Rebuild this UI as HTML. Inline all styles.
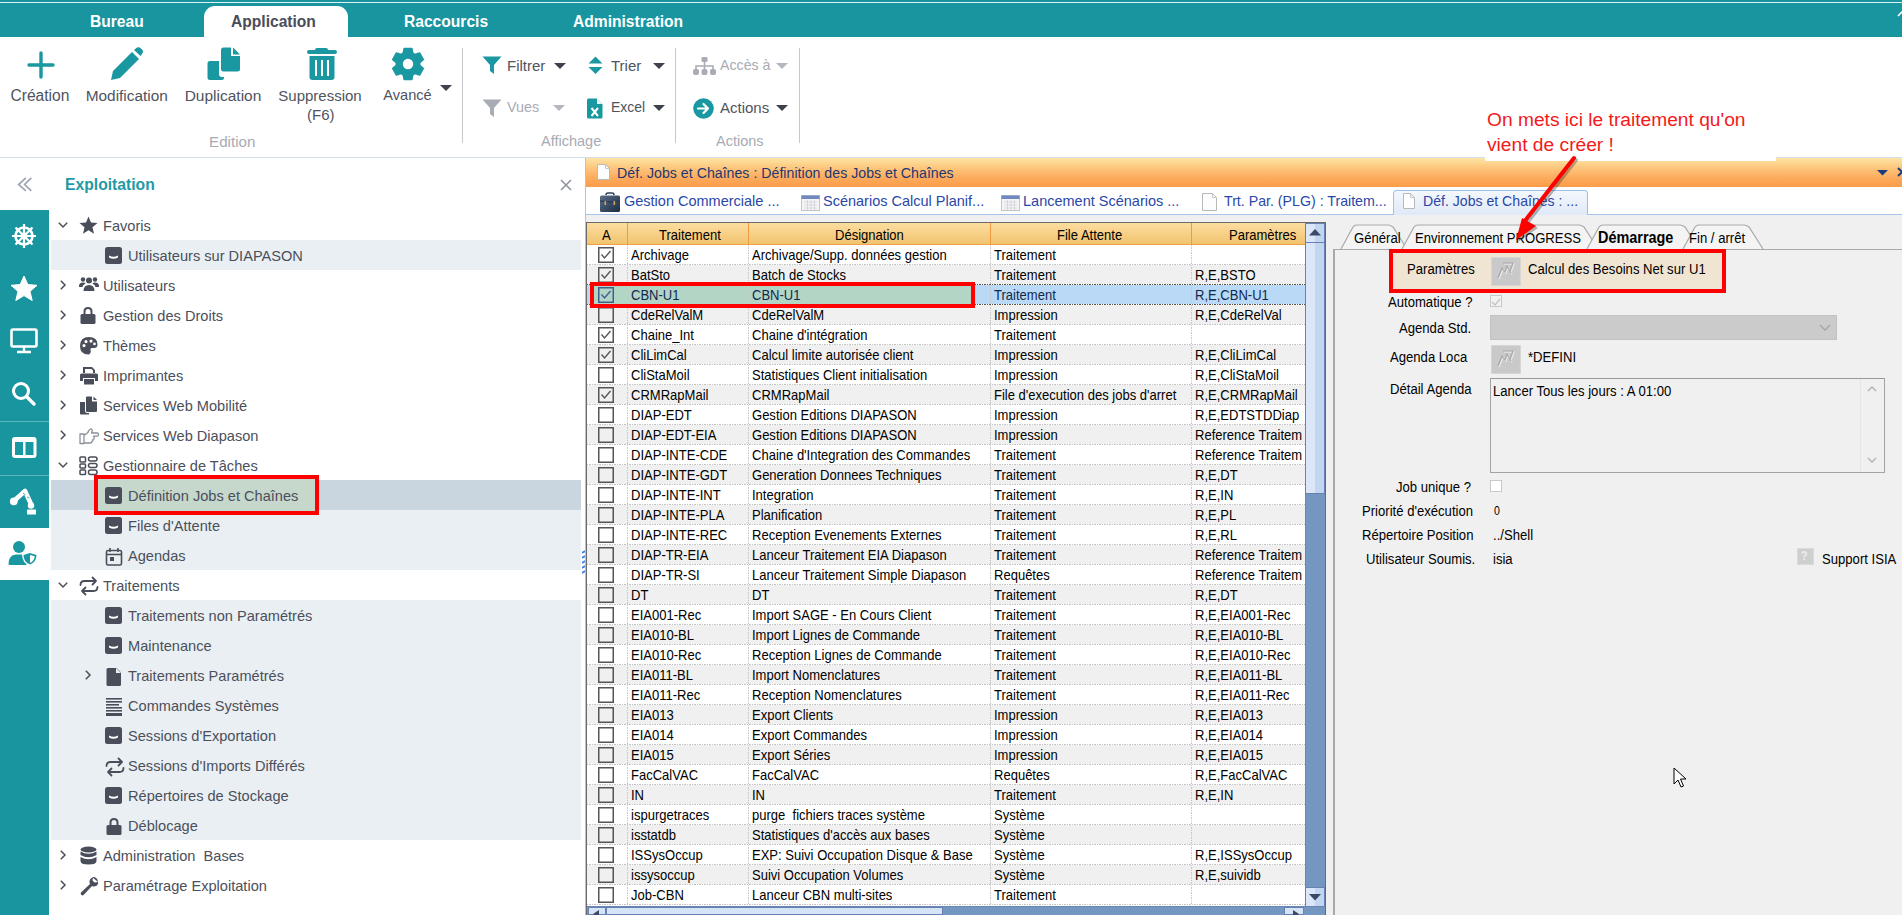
<!DOCTYPE html>
<html><head><meta charset="utf-8"><title>Diapason</title><style>
*{margin:0;padding:0;box-sizing:border-box}
html,body{width:1902px;height:915px;overflow:hidden;background:#fff;font-family:"Liberation Sans",sans-serif}
.a{position:absolute}
.t{position:absolute;white-space:nowrap}
svg{position:absolute;overflow:visible}
#topbar{left:0;top:0;width:1902px;height:37px;background:#1995a0}
#topline{left:0;top:2px;width:1902px;height:1px;background:#dff2f3}
.rtab{position:absolute;top:13px;font-size:15.6px;font-weight:bold;color:#fff;line-height:18px;white-space:nowrap}
#apptab{left:204px;top:6px;width:144px;height:31px;background:#fff;border-radius:11px 11px 0 0}
.rl{position:absolute;font-size:14.5px;color:#4f5360;line-height:17px;white-space:nowrap}
.gl{position:absolute;font-size:14.5px;color:#a8abb3;line-height:17px;white-space:nowrap}
.sep{position:absolute;top:48px;width:1px;height:95px;background:#c5c8cd}
.tri{position:absolute;width:0;height:0;border-left:6px solid transparent;border-right:6px solid transparent;border-top:6px solid #3e424c}
#ribline{left:0;top:157px;width:1902px;height:1px;background:#d4e0ea}
#navcol{left:0;top:210px;width:49px;height:705px;background:#1995a0}
.tree{position:absolute;font-size:14.6px;color:#4b4f5b;line-height:17px;white-space:nowrap}
.band{position:absolute;left:51px;width:530px;background:#eaeff3}
.g{position:absolute;font-size:14.8px;color:#000;line-height:16px;white-space:nowrap;transform:scaleX(0.88);transform-origin:0 0}
.dt{position:absolute;font-size:14.5px;color:#2a47a8;line-height:17px;white-space:nowrap}
.rp{position:absolute;font-size:14.9px;color:#000;line-height:16px;white-space:nowrap;transform:scaleX(0.88);transform-origin:0 0}
</style></head><body>
<div id="topbar" class="a"></div><div id="topline" class="a"></div><div id="apptab" class="a"></div>
<div class="rtab" style="left:90px">Bureau</div><div class="rtab" style="left:231px;color:#4a4d59">Application</div><div class="rtab" style="left:404px">Raccourcis</div><div class="rtab" style="left:573px">Administration</div>
<svg width="10" height="8" style="left:1897px;top:10px"><path d="M1 6 L5 2 L9 6" stroke="#fff" stroke-width="1.6" fill="none"/></svg>
<svg width="30" height="30" style="left:26px;top:50px"><path d="M15 3 V27 M3 15 H27" stroke="#1a98a2" stroke-width="3.4" stroke-linecap="round"/></svg><svg width="34" height="34" style="left:110px;top:47px"><g fill="#1a98a2"><path d="M1 33 L3 24 L22 5 L29 12 L10 31 Z"/><path d="M24 3 L27 0.5 Q29 -0.5 31 1.5 L32.5 3 Q34 5 32 7 L30.5 9 Z"/></g></svg><svg width="34" height="34" style="left:207px;top:47px"><g fill="#1a98a2"><path d="M3 14 H12 V27 Q12 30 15 30 H17 V31 Q17 33 15 33 H3 Q0.5 33 0.5 30.5 V16.5 Q0.5 14 3 14 Z"/><path d="M14 3 Q14 0.5 16.5 0.5 H24 V9 H33 V22 Q33 24.5 30.5 24.5 H16.5 Q14 24.5 14 22 Z"/><path d="M26 0.5 L33 7.5 H26 Z"/></g></svg><svg width="30" height="34" style="left:307px;top:47px"><g fill="#1a98a2"><path d="M10 1 H19 Q21 1 21 3 H28 Q30 3 30 5 Q30 7 28 7 H2 Q0 7 0 5 Q0 3 2 3 H8 Q8 1 10 1 Z"/><path d="M2.5 9 H27.5 V30 Q27.5 33 24.5 33 H5.5 Q2.5 33 2.5 30 Z"/></g><g stroke="#fff" stroke-width="2"><path d="M9 13 V29 M15 13 V29 M21 13 V29"/></g></svg><svg width="32" height="32" style="left:391.5px;top:48px"><path fill-rule="evenodd" fill="#1a98a2" stroke="#1a98a2" stroke-width="1.5" stroke-linejoin="round" d="M12.20 0.46 L19.80 0.46 L20.81 5.23 L22.93 6.45 L27.56 4.94 L31.36 11.52 L27.74 14.78 L27.74 17.22 L31.36 20.48 L27.56 27.06 L22.93 25.55 L20.81 26.77 L19.80 31.54 L12.20 31.54 L11.19 26.77 L9.07 25.55 L4.44 27.06 L0.64 20.48 L4.26 17.22 L4.26 14.78 L0.64 11.52 L4.44 4.94 L9.07 6.45 L11.19 5.23 Z M16 10 A6 6 0 1 0 16 22 A6 6 0 1 0 16 10 Z"/></svg><div class="tri" style="left:440px;top:85px"></div>
<div class="rl" style="left:-20.1px;top:86.5px;width:120px;text-align:center;font-size:15.6px">Création</div><div class="rl" style="left:66.8px;top:86.5px;width:120px;text-align:center;font-size:15.4px">Modification</div><div class="rl" style="left:163.0px;top:86.5px;width:120px;text-align:center;font-size:15.5px">Duplication</div><div class="rl" style="left:260.0px;top:86.5px;width:120px;text-align:center;font-size:15.0px">Suppression</div><div class="rl" style="left:260.8px;top:105.5px;width:120px;text-align:center;font-size:15.0px">(F6)</div><div class="rl" style="left:347.5px;top:86.5px;width:120px;text-align:center;font-size:14.6px">Avancé</div><div class="gl" style="left:209px;top:133px;font-size:15.2px">Edition</div>
<div class="sep" style="left:462px"></div><div class="sep" style="left:675px"></div><div class="sep" style="left:799px"></div>
<svg width="20" height="19" style="left:482px;top:56px"><path fill="#1a98a2" d="M0.5 0.5 H19.5 L12 9 V18 L8 15 V9 Z"/></svg><div class="rl" style="left:507px;top:57px;font-size:15px">Filtrer</div><div class="tri" style="left:554px;top:63px"></div><svg width="15" height="19" style="left:588px;top:56px"><path fill="#1a98a2" d="M7.5 0.5 L14.5 7.5 H0.5 Z M0.5 11 H14.5 L7.5 18 Z"/></svg><div class="rl" style="left:611px;top:57px;font-size:15px">Trier</div><div class="tri" style="left:653px;top:63px"></div><svg width="20" height="19" style="left:482px;top:99px"><path fill="#a9acb4" d="M0.5 0.5 H19.5 L12 9 V18 L8 15 V9 Z"/></svg><div class="gl" style="left:507px;top:99px;font-size:14.4px">Vues</div><div class="tri" style="left:553px;top:105px;border-top-color:#b4b7be"></div><svg width="16" height="21" style="left:587px;top:98px"><path fill="#1a98a2" d="M1.5 0.5 H10 L15.5 6 V19 Q15.5 20.5 14 20.5 H1.5 Q0 20.5 0 19 V2 Q0 0.5 1.5 0.5 Z"/><path fill="#fff" d="M10 0.5 V6 H15.5 Z" opacity="0.9"/><path d="M4.5 10 L11 18 M11 10 L4.5 18" stroke="#fff" stroke-width="2"/></svg><div class="rl" style="left:611px;top:99px;font-size:14px">Excel</div><div class="tri" style="left:653px;top:105px"></div><div class="gl" style="left:541px;top:133px">Affichage</div>
<svg width="23" height="18" style="left:693px;top:57px"><g fill="#a9acb4"><rect x="8.5" y="0" width="6" height="5" rx="1"/><rect x="0" y="12" width="6" height="6" rx="2"/><rect x="8.5" y="12" width="6" height="6" rx="2"/><rect x="17" y="12" width="6" height="6" rx="2"/></g><path d="M11.5 5 V12 M3 12 V9 H20 V12" stroke="#a9acb4" stroke-width="1.6" fill="none"/></svg><div class="gl" style="left:720px;top:57px;font-size:14.2px">Accès à</div><div class="tri" style="left:776px;top:63px;border-top-color:#b4b7be"></div><svg width="21" height="21" style="left:693px;top:98px"><circle cx="10.5" cy="10.5" r="10.3" fill="#1a98a2"/><path d="M5 10.5 H15 M10.5 6 L15 10.5 L10.5 15" stroke="#fff" stroke-width="2.2" fill="none" stroke-linecap="round" stroke-linejoin="round"/></svg><div class="rl" style="left:720px;top:99px;font-size:15px">Actions</div><div class="tri" style="left:776px;top:105px"></div><div class="gl" style="left:716px;top:133px">Actions</div>
<div id="ribline" class="a"></div>
<svg width="20" height="16" style="left:15px;top:176px"><path d="M10.3 2.4 L3.6 8.5 L10.3 14.4 M15.8 2.4 L9.6 8.5 L15.8 14.4" stroke="#9ba6b1" stroke-width="1.7" fill="none" stroke-linecap="round"/></svg><div class="t" style="left:65px;top:176px;font-size:15.7px;font-weight:bold;color:#1f9aa5;line-height:18px">Exploitation</div><svg width="12" height="12" style="left:560px;top:179px"><path d="M1 1 L11 11 M11 1 L1 11" stroke="#8c929a" stroke-width="1.5"/></svg>
<div id="navcol" class="a"></div><div class="a" style="left:0;top:421px;width:49px;height:1px;background:#5cb7be"></div><div class="a" style="left:0;top:475px;width:49px;height:1px;background:#5cb7be"></div><div class="a" style="left:0;top:528px;width:49px;height:52px;background:#fff"></div>
<svg width="26" height="26" style="left:11px;top:223px"><g fill="none" stroke="#fff"><circle cx="13" cy="13" r="8.5" stroke-width="2.6"/><circle cx="13" cy="13" r="2.5" stroke-width="2"/><path d="M13 1 V25 M1 13 H25 M4.5 4.5 L21.5 21.5 M21.5 4.5 L4.5 21.5" stroke-width="2.2"/></g></svg><svg width="28" height="27" style="left:10px;top:275px"><path fill="#fff" d="M14 1 L17.8 9.6 L27 10.3 L20 16.4 L22.2 25.5 L14 20.6 L5.8 25.5 L8 16.4 L1 10.3 L10.2 9.6 Z" stroke="#fff" stroke-width="1" stroke-linejoin="round"/></svg><svg width="28" height="26" style="left:10px;top:328px"><rect x="1.5" y="1.5" width="25" height="17" rx="1.5" fill="none" stroke="#fff" stroke-width="2.6"/><path d="M14 19 V23 M7 24 H21" stroke="#fff" stroke-width="2.4"/></svg><svg width="26" height="26" style="left:11px;top:381px"><circle cx="10" cy="10" r="7.5" fill="none" stroke="#fff" stroke-width="3"/><path d="M15.5 15.5 L23 23" stroke="#fff" stroke-width="3.4" stroke-linecap="round"/></svg><svg width="26" height="22" style="left:12px;top:437px"><rect x="0" y="0" width="24.5" height="21" rx="3" fill="#fff"/><rect x="3" y="5" width="8" height="13" fill="#1a98a2"/><rect x="13.5" y="5" width="8" height="13" fill="#1a98a2"/></svg><svg width="30" height="30" style="left:8px;top:487px"><g fill="#fff"><circle cx="5.8" cy="14.3" r="3.9"/><circle cx="23" cy="18.5" r="3.2"/><rect x="19" y="22.5" width="9" height="5" rx="0.5"/></g><path d="M7.5 12.5 L17 4 L23 17" stroke="#fff" stroke-width="4.6" fill="none" stroke-linejoin="round" stroke-linecap="round"/><path d="M15 6 L17.5 8 M19 10 L21.5 11" stroke="#1a98a2" stroke-width="0.8"/></svg><svg width="30" height="26" style="left:8px;top:540px"><g fill="#1a98a2"><circle cx="11" cy="7" r="6"/><path d="M0.5 24 Q0.5 15 8 14.5 H14 Q17 14.5 18.5 16 V25 H2 Q0.5 25 0.5 24 Z"/><path d="M22 11.5 L30 14 Q30 23 22 26 Q14 23 14 14 Z" fill="#fff"/><path d="M22 13 L28.5 15 Q28.5 22 22 24.5 Q15.5 22 15.5 15 Z"/></g><path d="M22 15 V23 Q26.5 21 26.7 16.3 Z" fill="#fff"/></svg>
<div class="band" style="top:240px;height:30px"></div><div class="band" style="top:480px;height:90px"></div><div class="band" style="top:480px;height:30px;background:#c9d6e0"></div><div class="band" style="top:600px;height:240px"></div>
<div class="a" style="left:94px;top:475px;width:225px;height:40px;border:4.5px solid #f00;background:#c6d7cc"></div>
<svg width="10" height="6" style="left:58px;top:222px"><path d="M0.8 0.8 L5 5 L9.2 0.8" stroke="#4a4e5a" stroke-width="1.5" fill="none"/></svg><svg width="20" height="20" style="left:79px;top:216px"><path fill="#4a4e5a" d="M9.5 0.5 L12 6.5 L18.5 7 L13.5 11.3 L15 17.8 L9.5 14.3 L4 17.8 L5.5 11.3 L0.5 7 L7 6.5 Z"/></svg><div class="tree" style="left:103px;top:218px">Favoris</div><svg width="17" height="17" style="left:105px;top:247px"><rect x="0" y="0" width="17" height="17" rx="2.5" fill="#4a4e5a"/><path d="M4 8.5 Q8.5 11 13 8.5 V10.5 Q8.5 13 4 10.5 Z" fill="#fff"/></svg><div class="tree" style="left:128px;top:248px">Utilisateurs sur DIAPASON</div><svg width="6" height="10" style="left:60px;top:280px"><path d="M0.8 0.8 L5 5 L0.8 9.2" stroke="#4a4e5a" stroke-width="1.5" fill="none"/></svg><svg width="20" height="20" style="left:79px;top:276px"><g fill="#4a4e5a"><circle cx="10" cy="4.5" r="3"/><circle cx="4" cy="3.5" r="2.2"/><circle cx="16" cy="3.5" r="2.2"/><path d="M4.5 15 Q4.5 9 10 9 Q15.5 9 15.5 15 Z"/><path d="M0 10 Q0 6.5 4 6.5 Q6 6.5 6.5 7.5 Q3.5 9 3.5 11 H0 Z"/><path d="M20 10 Q20 6.5 16 6.5 Q14 6.5 13.5 7.5 Q16.5 9 16.5 11 H20 Z"/></g></svg><div class="tree" style="left:103px;top:278px">Utilisateurs</div><svg width="6" height="10" style="left:60px;top:310px"><path d="M0.8 0.8 L5 5 L0.8 9.2" stroke="#4a4e5a" stroke-width="1.5" fill="none"/></svg><svg width="20" height="20" style="left:79px;top:306px"><g fill="#4a4e5a"><path d="M4.5 8 V5.5 Q4.5 1 9 1 Q13.5 1 13.5 5.5 V8 H11.5 V5.5 Q11.5 3 9 3 Q6.5 3 6.5 5.5 V8 Z"/><rect x="1.5" y="8" width="15" height="10" rx="1.5"/></g></svg><div class="tree" style="left:103px;top:308px">Gestion des Droits</div><svg width="6" height="10" style="left:60px;top:340px"><path d="M0.8 0.8 L5 5 L0.8 9.2" stroke="#4a4e5a" stroke-width="1.5" fill="none"/></svg><svg width="20" height="20" style="left:79px;top:336px"><path fill="#4a4e5a" fill-rule="evenodd" d="M10 1 Q18.5 1 18.5 8.5 Q18.5 12 15 12 H13 Q11 12 11.5 14 Q12.5 16 11 17.5 Q10.5 18.5 9.5 18.5 Q1 18.5 1 10 Q1 1 10 1 Z M5 8 A1.6 1.6 0 1 0 5 11.2 A1.6 1.6 0 1 0 5 8 Z M7 4 A1.6 1.6 0 1 0 7 7.2 A1.6 1.6 0 1 0 7 4 Z M12 3.5 A1.6 1.6 0 1 0 12 6.7 A1.6 1.6 0 1 0 12 3.5 Z M15.5 6.5 A1.4 1.4 0 1 0 15.5 9.3 A1.4 1.4 0 1 0 15.5 6.5 Z"/></svg><div class="tree" style="left:103px;top:338px">Thèmes</div><svg width="6" height="10" style="left:60px;top:370px"><path d="M0.8 0.8 L5 5 L0.8 9.2" stroke="#4a4e5a" stroke-width="1.5" fill="none"/></svg><svg width="20" height="20" style="left:79px;top:366px"><g fill="#4a4e5a"><path d="M4 1 H13 L16 4 V7 H14 V4.5 L12.5 3 H6 V7 H4 Z"/><path d="M2.5 7.5 H17.5 Q19 7.5 19 9 V15 H16 V12 H4 V15 H1 V9 Q1 7.5 2.5 7.5 Z"/><rect x="5" y="13" width="10" height="5.5"/></g></svg><div class="tree" style="left:103px;top:368px">Imprimantes</div><svg width="6" height="10" style="left:60px;top:400px"><path d="M0.8 0.8 L5 5 L0.8 9.2" stroke="#4a4e5a" stroke-width="1.5" fill="none"/></svg><svg width="20" height="20" style="left:79px;top:396px"><g fill="#4a4e5a"><path d="M1 6 H6 V15 Q6 17 8 17 H10 V18.5 H2 Q1 18.5 1 17.5 Z"/><path d="M7 1.5 Q7 0.5 8 0.5 H13 V5.5 H18 V15 Q18 16 17 16 H8 Q7 16 7 15 Z"/><path d="M14.5 0.5 L18 4 H14.5 Z"/></g></svg><div class="tree" style="left:103px;top:398px">Services Web Mobilité</div><svg width="6" height="10" style="left:60px;top:430px"><path d="M0.8 0.8 L5 5 L0.8 9.2" stroke="#4a4e5a" stroke-width="1.5" fill="none"/></svg><svg width="20" height="20" style="left:79px;top:426px"><path fill="none" stroke="#8b8f99" stroke-width="1.3" stroke-linejoin="round" d="M1 8 H5 V17.5 H1 Z M5 9 Q8.5 8 10 4.5 Q11 2.5 12.5 3 Q13.8 3.8 12.6 7 H18 Q19.5 7 19.5 8.6 Q19.5 10.2 18 10.2 H14.5 Q15.5 10.8 15.2 12.2 Q14.8 13.4 13.8 13.4 Q14.4 14.8 12.8 15.4 Q13 17 11.3 17 H5"/></svg><div class="tree" style="left:103px;top:428px">Services Web Diapason</div><svg width="10" height="6" style="left:58px;top:462px"><path d="M0.8 0.8 L5 5 L9.2 0.8" stroke="#4a4e5a" stroke-width="1.5" fill="none"/></svg><svg width="20" height="20" style="left:79px;top:456px"><g fill="none" stroke="#4a4e5a" stroke-width="1.5"><rect x="1" y="1" width="5.5" height="5" rx="0.8"/><rect x="1" y="8" width="5.5" height="4" rx="0.8"/><rect x="1" y="14" width="5.5" height="4.5" rx="0.8"/><rect x="9.5" y="1" width="8.5" height="4" rx="2"/><rect x="9.5" y="7.5" width="8.5" height="4" rx="2"/><rect x="9.5" y="14" width="8.5" height="4.5" rx="2"/></g></svg><div class="tree" style="left:103px;top:458px">Gestionnaire de Tâches</div><svg width="17" height="17" style="left:105px;top:487px"><rect x="0" y="0" width="17" height="17" rx="2.5" fill="#4a4e5a"/><path d="M4 8.5 Q8.5 11 13 8.5 V10.5 Q8.5 13 4 10.5 Z" fill="#fff"/></svg><div class="tree" style="left:128px;top:488px">Définition Jobs et Chaînes</div><svg width="17" height="17" style="left:105px;top:517px"><rect x="0" y="0" width="17" height="17" rx="2.5" fill="#4a4e5a"/><path d="M4 8.5 Q8.5 11 13 8.5 V10.5 Q8.5 13 4 10.5 Z" fill="#fff"/></svg><div class="tree" style="left:128px;top:518px">Files d'Attente</div><svg width="20" height="20" style="left:105px;top:547px"><g fill="none" stroke="#4a4e5a" stroke-width="1.6"><rect x="1.5" y="3.5" width="15" height="14.5" rx="1.5"/><path d="M1.5 7.5 H16.5 M5 1 V5 M13 1 V5"/></g><rect x="5" y="10" width="4" height="4" fill="#4a4e5a"/></svg><div class="tree" style="left:128px;top:548px">Agendas</div><svg width="10" height="6" style="left:58px;top:582px"><path d="M0.8 0.8 L5 5 L9.2 0.8" stroke="#4a4e5a" stroke-width="1.5" fill="none"/></svg><svg width="20" height="20" style="left:79px;top:576px"><g fill="none" stroke="#4a4e5a" stroke-width="1.8" stroke-linecap="round" stroke-linejoin="round"><path d="M1.5 9 Q1.5 5 5.5 5 H17 M13.5 1.5 L17 5 L13.5 8.5"/><path d="M18.5 11 Q18.5 15 14.5 15 H3 M6.5 11.5 L3 15 L6.5 18.5"/></g></svg><div class="tree" style="left:103px;top:578px">Traitements</div><svg width="17" height="17" style="left:105px;top:607px"><rect x="0" y="0" width="17" height="17" rx="2.5" fill="#4a4e5a"/><path d="M4 8.5 Q8.5 11 13 8.5 V10.5 Q8.5 13 4 10.5 Z" fill="#fff"/></svg><div class="tree" style="left:128px;top:608px">Traitements non Paramétrés</div><svg width="17" height="17" style="left:105px;top:637px"><rect x="0" y="0" width="17" height="17" rx="2.5" fill="#4a4e5a"/><path d="M4 8.5 Q8.5 11 13 8.5 V10.5 Q8.5 13 4 10.5 Z" fill="#fff"/></svg><div class="tree" style="left:128px;top:638px">Maintenance</div><svg width="6" height="10" style="left:85px;top:670px"><path d="M0.8 0.8 L5 5 L0.8 9.2" stroke="#4a4e5a" stroke-width="1.5" fill="none"/></svg><svg width="20" height="20" style="left:105px;top:667px"><path fill="#4a4e5a" d="M3 1 H11.5 L16 5.5 V17.5 Q16 19 14.5 19 H3 Q1.5 19 1.5 17.5 V2.5 Q1.5 1 3 1 Z"/><path fill="#eaeff3" d="M11 1 V6 H16 Z"/></svg><div class="tree" style="left:128px;top:668px">Traitements Paramétrés</div><svg width="20" height="20" style="left:105px;top:697px"><g fill="#4a4e5a"><rect x="1" y="1" width="16" height="1.6"/><rect x="1" y="4" width="16" height="1.6"/><rect x="1" y="7" width="13" height="1.6"/><rect x="1" y="10" width="16" height="1.6"/><rect x="1" y="13" width="16" height="1.6"/><rect x="1" y="16" width="16" height="3"/></g></svg><div class="tree" style="left:128px;top:698px">Commandes Systèmes</div><svg width="17" height="17" style="left:105px;top:727px"><rect x="0" y="0" width="17" height="17" rx="2.5" fill="#4a4e5a"/><path d="M4 8.5 Q8.5 11 13 8.5 V10.5 Q8.5 13 4 10.5 Z" fill="#fff"/></svg><div class="tree" style="left:128px;top:728px">Sessions d'Exportation</div><svg width="20" height="20" style="left:105px;top:757px"><g fill="none" stroke="#4a4e5a" stroke-width="1.8" stroke-linecap="round" stroke-linejoin="round"><path d="M1.5 9 Q1.5 5 5.5 5 H17 M13.5 1.5 L17 5 L13.5 8.5"/><path d="M18.5 11 Q18.5 15 14.5 15 H3 M6.5 11.5 L3 15 L6.5 18.5"/></g></svg><div class="tree" style="left:128px;top:758px">Sessions d'Imports Différés</div><svg width="17" height="17" style="left:105px;top:787px"><rect x="0" y="0" width="17" height="17" rx="2.5" fill="#4a4e5a"/><path d="M4 8.5 Q8.5 11 13 8.5 V10.5 Q8.5 13 4 10.5 Z" fill="#fff"/></svg><div class="tree" style="left:128px;top:788px">Répertoires de Stockage</div><svg width="20" height="20" style="left:105px;top:817px"><g fill="#4a4e5a"><path d="M4.5 8 V5.5 Q4.5 1 9 1 Q13.5 1 13.5 5.5 V8 H11.5 V5.5 Q11.5 3 9 3 Q6.5 3 6.5 5.5 V8 Z"/><rect x="1.5" y="8" width="15" height="10" rx="1.5"/></g></svg><div class="tree" style="left:128px;top:818px">Déblocage</div><svg width="6" height="10" style="left:60px;top:850px"><path d="M0.8 0.8 L5 5 L0.8 9.2" stroke="#4a4e5a" stroke-width="1.5" fill="none"/></svg><svg width="20" height="20" style="left:79px;top:846px"><g fill="#4a4e5a"><ellipse cx="9.5" cy="3.5" rx="8" ry="3"/><path d="M1.5 5.5 Q9.5 10 17.5 5.5 V9 Q9.5 13.5 1.5 9 Z"/><path d="M1.5 11 Q9.5 15.5 17.5 11 V15 Q17.5 18.5 9.5 18.5 Q1.5 18.5 1.5 15 Z"/></g></svg><div class="tree" style="left:103px;top:848px">Administration&nbsp; Bases</div><svg width="6" height="10" style="left:60px;top:880px"><path d="M0.8 0.8 L5 5 L0.8 9.2" stroke="#4a4e5a" stroke-width="1.5" fill="none"/></svg><svg width="20" height="20" style="left:79px;top:876px"><path fill="#4a4e5a" d="M13 1 Q18.5 0.5 19 6 L15.5 6.5 L13.5 4.5 L14 1.5 Q10.5 2 10.5 6 Q10.5 7 11 8 L2 16.5 Q1 18 2.5 19 Q3.5 20 5 18.5 L13 10 Q14 10.5 15 10.5 Q19.5 10 19 6 Z"/></svg><div class="tree" style="left:103px;top:878px">Paramétrage Exploitation</div>
<div class="a" style="left:582px;top:551px;width:3px;height:2px;background:#3a7fe0;transform:skewY(-30deg)"></div><div class="a" style="left:582px;top:556px;width:3px;height:2px;background:#3a7fe0;transform:skewY(-30deg)"></div><div class="a" style="left:582px;top:561px;width:3px;height:2px;background:#3a7fe0;transform:skewY(-30deg)"></div><div class="a" style="left:582px;top:566px;width:3px;height:2px;background:#3a7fe0;transform:skewY(-30deg)"></div><div class="a" style="left:582px;top:571px;width:3px;height:2px;background:#3a7fe0;transform:skewY(-30deg)"></div>
<div class="a" style="left:585px;top:158px;width:1px;height:757px;background:#a9c4ea"></div><div class="a" style="left:586px;top:158px;width:1316px;height:29px;background:linear-gradient(#fde4a4 0%,#fdc57c 35%,#fcaa5c 70%,#fb9d48 100%)"></div><svg width="13" height="16" style="left:597px;top:164px"><path d="M0.5 0.5 H8.5 L12.5 4.5 V15.5 H0.5 Z" fill="#fdfdfd" stroke="#b9b9b9"/><path d="M8.5 0.5 V4.5 H12.5" fill="none" stroke="#c8c8c8"/></svg><div class="t" style="left:617px;top:163.8px;font-size:15.2px;color:#1f3770;line-height:17px;transform:scaleX(0.934);transform-origin:0 0">Déf. Jobs et Chaînes : Définition des Jobs et Chaînes</div><svg width="11" height="6" style="left:1877px;top:170px"><path d="M0 0 H11 L5.5 5.5 Z" fill="#1b3a78"/></svg><svg width="10" height="10" style="left:1897px;top:167px"><path d="M1 1 L9 9 M9 1 L1 9" stroke="#1b3a78" stroke-width="1.9"/></svg>
<div class="a" style="left:586px;top:187px;width:1316px;height:28px;background:#fff"></div><div class="a" style="left:586px;top:214px;width:1316px;height:2px;background:#a6c3ea"></div><div class="a" style="left:1393px;top:190px;width:195px;height:25px;background:linear-gradient(#f4f8fd,#dfe9f7);border:1px solid #9fc0ea;border-bottom:none;border-radius:4px 4px 0 0"></div><svg width="22" height="21" style="left:598.5px;top:191.5px"><defs><linearGradient id="bc" x1="0" y1="0" x2="1" y2="1"><stop offset="0" stop-color="#5d7088"/><stop offset="0.5" stop-color="#3a4d66"/><stop offset="1" stop-color="#1f2d40"/></linearGradient></defs><path d="M7 3 Q7 1 9 1 H13 Q15 1 15 3" stroke="#2f3f55" stroke-width="1.5" fill="none"/><path d="M2.5 3.5 H19.5 Q21 3.5 21 5 V18.5 Q21 20 19.5 20 H2.5 Q1 20 1 18.5 V5 Q1 3.5 2.5 3.5 Z" fill="url(#bc)"/><path d="M1 9 Q11 11 21 9" stroke="#22324a" stroke-width="1" fill="none"/><rect x="5.5" y="9" width="1.6" height="4" fill="#c9a45a"/><rect x="14.5" y="9" width="1.6" height="4" fill="#c9a45a"/></svg><div class="dt" style="left:624px;top:193px">Gestion Commerciale ...</div><svg width="19" height="16" style="left:801px;top:195px"><rect x="0.5" y="0.5" width="18" height="15" fill="#f5f5f8" stroke="#c2c4ca"/><rect x="0.5" y="0.5" width="18" height="3.5" fill="#6f88bd"/><path d="M3 7 H16 M3 10 H16 M3 13 H16 M6.5 5 V15 M10 5 V15 M13.5 5 V15" stroke="#d0d2d8" stroke-width="0.8"/></svg><div class="dt" style="left:823px;top:193px">Scénarios Calcul Planif...</div><svg width="19" height="16" style="left:1001px;top:195px"><rect x="0.5" y="0.5" width="18" height="15" fill="#f5f5f8" stroke="#c2c4ca"/><rect x="0.5" y="0.5" width="18" height="3.5" fill="#6f88bd"/><path d="M3 7 H16 M3 10 H16 M3 13 H16 M6.5 5 V15 M10 5 V15 M13.5 5 V15" stroke="#d0d2d8" stroke-width="0.8"/></svg><div class="dt" style="left:1023px;top:193px">Lancement Scénarios ...</div><svg width="15" height="18" style="left:1202px;top:193px"><path d="M0.5 0.5 H10.5 L14.5 4.5 V17.5 H0.5 Z" fill="#fdfdfd" stroke="#b9b9b9"/><path d="M10.5 0.5 V4.5 H14.5" fill="none" stroke="#c8c8c8"/></svg><div class="dt" style="left:1224px;top:193px;font-size:14.2px">Trt. Par. (PLG) : Traitem...</div><svg width="12" height="16" style="left:1403px;top:193px"><path d="M0.5 0.5 H7.5 L11.5 4.5 V15.5 H0.5 Z" fill="#fdfdfd" stroke="#b9b9b9"/><path d="M7.5 0.5 V4.5 H11.5" fill="none" stroke="#c8c8c8"/></svg><div class="dt" style="left:1423px;top:193px;font-size:14.1px">Déf. Jobs et Chaînes : ...</div>
<div class="a" style="left:586px;top:215px;width:1316px;height:700px;background:#f0f0f0"></div><div class="a" style="left:586px;top:222px;width:740px;height:693px;background:#fff;border-left:1px solid #6a6a6a;border-top:1px solid #6a6a6a;border-right:1px solid #6a6a6a"></div><div class="a" style="left:587px;top:223px;width:718px;height:23px;background:linear-gradient(#fcdda0,#f1c46f);border-bottom:2px solid #f1a048"></div><div class="a" style="left:627px;top:223px;width:1px;height:22px;background:#f09a40"></div><div class="a" style="left:748px;top:223px;width:1px;height:22px;background:#f09a40"></div><div class="a" style="left:990px;top:223px;width:1px;height:22px;background:#f09a40"></div><div class="a" style="left:1191px;top:223px;width:1px;height:22px;background:#f09a40"></div><div class="g" style="left:602px;top:227px">A</div><div class="g" style="left:659px;top:227px">Traitement</div><div class="g" style="left:835px;top:227px">Désignation</div><div class="g" style="left:1057px;top:227px">File Attente</div><div class="g" style="left:1229px;top:227px">Paramètres</div>
<div class="a" style="left:587px;top:245px;width:718px;height:19px;background:#fff"></div><div class="a" style="left:587px;top:264px;width:718px;height:1px;background:repeating-linear-gradient(90deg,#c4c4c4 0 1.3px,transparent 1.3px 2.5px)"></div><svg width="16" height="16" style="left:598px;top:247px"><rect x="0.75" y="0.75" width="14.5" height="14.5" fill="none" stroke="#555" stroke-width="1.5"/><path d="M3.5 7.5 L6.5 11 L12.5 4" fill="none" stroke="#555" stroke-width="1.4"/></svg><div class="g" style="left:631px;top:247px;color:#000">Archivage</div><div class="g" style="left:752px;top:247px;color:#000">Archivage/Supp. données gestion</div><div class="g" style="left:994px;top:247px;color:#000">Traitement</div><div class="a" style="left:587px;top:265px;width:718px;height:19px;background:#f0f0f0"></div><div class="a" style="left:587px;top:284px;width:718px;height:1px;background:repeating-linear-gradient(90deg,#c4c4c4 0 1.3px,transparent 1.3px 2.5px)"></div><svg width="16" height="16" style="left:598px;top:267px"><rect x="0.75" y="0.75" width="14.5" height="14.5" fill="none" stroke="#555" stroke-width="1.5"/><path d="M3.5 7.5 L6.5 11 L12.5 4" fill="none" stroke="#555" stroke-width="1.4"/></svg><div class="g" style="left:631px;top:267px;color:#000">BatSto</div><div class="g" style="left:752px;top:267px;color:#000">Batch de Stocks</div><div class="g" style="left:994px;top:267px;color:#000">Traitement</div><div class="g" style="left:1195px;top:267px;color:#000;width:124px;overflow:hidden">R,E,BSTO</div><div class="a" style="left:587px;top:285px;width:718px;height:19px;background:#b9d9f6"></div><div class="a" style="left:594px;top:286px;width:377px;height:18px;background:#b3d5c6"></div><div class="a" style="left:587px;top:304px;width:718px;height:1px;background:repeating-linear-gradient(90deg,#c4c4c4 0 1.3px,transparent 1.3px 2.5px)"></div><svg width="16" height="16" style="left:598px;top:287px"><rect x="0.75" y="0.75" width="14.5" height="14.5" fill="none" stroke="#3f5f8f" stroke-width="1.5"/><path d="M3.5 7.5 L6.5 11 L12.5 4" fill="none" stroke="#3f5f8f" stroke-width="1.4"/></svg><div class="g" style="left:631px;top:287px;color:#10284e">CBN-U1</div><div class="g" style="left:752px;top:287px;color:#10284e">CBN-U1</div><div class="g" style="left:994px;top:287px;color:#10284e">Traitement</div><div class="g" style="left:1195px;top:287px;color:#10284e;width:124px;overflow:hidden">R,E,CBN-U1</div><div class="a" style="left:587px;top:305px;width:718px;height:19px;background:#f0f0f0"></div><div class="a" style="left:587px;top:324px;width:718px;height:1px;background:repeating-linear-gradient(90deg,#c4c4c4 0 1.3px,transparent 1.3px 2.5px)"></div><svg width="16" height="16" style="left:598px;top:307px"><rect x="0.75" y="0.75" width="14.5" height="14.5" fill="none" stroke="#555" stroke-width="1.5"/></svg><div class="g" style="left:631px;top:307px;color:#000">CdeRelValM</div><div class="g" style="left:752px;top:307px;color:#000">CdeRelValM</div><div class="g" style="left:994px;top:307px;color:#000">Impression</div><div class="g" style="left:1195px;top:307px;color:#000;width:124px;overflow:hidden">R,E,CdeRelVal</div><div class="a" style="left:587px;top:325px;width:718px;height:19px;background:#fff"></div><div class="a" style="left:587px;top:344px;width:718px;height:1px;background:repeating-linear-gradient(90deg,#c4c4c4 0 1.3px,transparent 1.3px 2.5px)"></div><svg width="16" height="16" style="left:598px;top:327px"><rect x="0.75" y="0.75" width="14.5" height="14.5" fill="none" stroke="#555" stroke-width="1.5"/><path d="M3.5 7.5 L6.5 11 L12.5 4" fill="none" stroke="#555" stroke-width="1.4"/></svg><div class="g" style="left:631px;top:327px;color:#000">Chaine_Int</div><div class="g" style="left:752px;top:327px;color:#000">Chaine d'intégration</div><div class="g" style="left:994px;top:327px;color:#000">Traitement</div><div class="a" style="left:587px;top:345px;width:718px;height:19px;background:#f0f0f0"></div><div class="a" style="left:587px;top:364px;width:718px;height:1px;background:repeating-linear-gradient(90deg,#c4c4c4 0 1.3px,transparent 1.3px 2.5px)"></div><svg width="16" height="16" style="left:598px;top:347px"><rect x="0.75" y="0.75" width="14.5" height="14.5" fill="none" stroke="#555" stroke-width="1.5"/><path d="M3.5 7.5 L6.5 11 L12.5 4" fill="none" stroke="#555" stroke-width="1.4"/></svg><div class="g" style="left:631px;top:347px;color:#000">CliLimCal</div><div class="g" style="left:752px;top:347px;color:#000">Calcul limite autorisée client</div><div class="g" style="left:994px;top:347px;color:#000">Impression</div><div class="g" style="left:1195px;top:347px;color:#000;width:124px;overflow:hidden">R,E,CliLimCal</div><div class="a" style="left:587px;top:365px;width:718px;height:19px;background:#fff"></div><div class="a" style="left:587px;top:384px;width:718px;height:1px;background:repeating-linear-gradient(90deg,#c4c4c4 0 1.3px,transparent 1.3px 2.5px)"></div><svg width="16" height="16" style="left:598px;top:367px"><rect x="0.75" y="0.75" width="14.5" height="14.5" fill="none" stroke="#555" stroke-width="1.5"/></svg><div class="g" style="left:631px;top:367px;color:#000">CliStaMoil</div><div class="g" style="left:752px;top:367px;color:#000">Statistiques Client initialisation</div><div class="g" style="left:994px;top:367px;color:#000">Impression</div><div class="g" style="left:1195px;top:367px;color:#000;width:124px;overflow:hidden">R,E,CliStaMoil</div><div class="a" style="left:587px;top:385px;width:718px;height:19px;background:#f0f0f0"></div><div class="a" style="left:587px;top:404px;width:718px;height:1px;background:repeating-linear-gradient(90deg,#c4c4c4 0 1.3px,transparent 1.3px 2.5px)"></div><svg width="16" height="16" style="left:598px;top:387px"><rect x="0.75" y="0.75" width="14.5" height="14.5" fill="none" stroke="#555" stroke-width="1.5"/><path d="M3.5 7.5 L6.5 11 L12.5 4" fill="none" stroke="#555" stroke-width="1.4"/></svg><div class="g" style="left:631px;top:387px;color:#000">CRMRapMail</div><div class="g" style="left:752px;top:387px;color:#000">CRMRapMail</div><div class="g" style="left:994px;top:387px;color:#000">File d'execution des jobs d'arret</div><div class="g" style="left:1195px;top:387px;color:#000;width:124px;overflow:hidden">R,E,CRMRapMail</div><div class="a" style="left:587px;top:405px;width:718px;height:19px;background:#fff"></div><div class="a" style="left:587px;top:424px;width:718px;height:1px;background:repeating-linear-gradient(90deg,#c4c4c4 0 1.3px,transparent 1.3px 2.5px)"></div><svg width="16" height="16" style="left:598px;top:407px"><rect x="0.75" y="0.75" width="14.5" height="14.5" fill="none" stroke="#555" stroke-width="1.5"/></svg><div class="g" style="left:631px;top:407px;color:#000">DIAP-EDT</div><div class="g" style="left:752px;top:407px;color:#000">Gestion Editions DIAPASON</div><div class="g" style="left:994px;top:407px;color:#000">Impression</div><div class="g" style="left:1195px;top:407px;color:#000;width:124px;overflow:hidden">R,E,EDTSTDDiap</div><div class="a" style="left:587px;top:425px;width:718px;height:19px;background:#f0f0f0"></div><div class="a" style="left:587px;top:444px;width:718px;height:1px;background:repeating-linear-gradient(90deg,#c4c4c4 0 1.3px,transparent 1.3px 2.5px)"></div><svg width="16" height="16" style="left:598px;top:427px"><rect x="0.75" y="0.75" width="14.5" height="14.5" fill="none" stroke="#555" stroke-width="1.5"/></svg><div class="g" style="left:631px;top:427px;color:#000">DIAP-EDT-EIA</div><div class="g" style="left:752px;top:427px;color:#000">Gestion Editions DIAPASON</div><div class="g" style="left:994px;top:427px;color:#000">Impression</div><div class="g" style="left:1195px;top:427px;color:#000;width:124px;overflow:hidden">Reference Traitem</div><div class="a" style="left:587px;top:445px;width:718px;height:19px;background:#fff"></div><div class="a" style="left:587px;top:464px;width:718px;height:1px;background:repeating-linear-gradient(90deg,#c4c4c4 0 1.3px,transparent 1.3px 2.5px)"></div><svg width="16" height="16" style="left:598px;top:447px"><rect x="0.75" y="0.75" width="14.5" height="14.5" fill="none" stroke="#555" stroke-width="1.5"/></svg><div class="g" style="left:631px;top:447px;color:#000">DIAP-INTE-CDE</div><div class="g" style="left:752px;top:447px;color:#000">Chaine d'Integration des Commandes</div><div class="g" style="left:994px;top:447px;color:#000">Traitement</div><div class="g" style="left:1195px;top:447px;color:#000;width:124px;overflow:hidden">Reference Traitem</div><div class="a" style="left:587px;top:465px;width:718px;height:19px;background:#f0f0f0"></div><div class="a" style="left:587px;top:484px;width:718px;height:1px;background:repeating-linear-gradient(90deg,#c4c4c4 0 1.3px,transparent 1.3px 2.5px)"></div><svg width="16" height="16" style="left:598px;top:467px"><rect x="0.75" y="0.75" width="14.5" height="14.5" fill="none" stroke="#555" stroke-width="1.5"/></svg><div class="g" style="left:631px;top:467px;color:#000">DIAP-INTE-GDT</div><div class="g" style="left:752px;top:467px;color:#000">Generation Donnees Techniques</div><div class="g" style="left:994px;top:467px;color:#000">Traitement</div><div class="g" style="left:1195px;top:467px;color:#000;width:124px;overflow:hidden">R,E,DT</div><div class="a" style="left:587px;top:485px;width:718px;height:19px;background:#fff"></div><div class="a" style="left:587px;top:504px;width:718px;height:1px;background:repeating-linear-gradient(90deg,#c4c4c4 0 1.3px,transparent 1.3px 2.5px)"></div><svg width="16" height="16" style="left:598px;top:487px"><rect x="0.75" y="0.75" width="14.5" height="14.5" fill="none" stroke="#555" stroke-width="1.5"/></svg><div class="g" style="left:631px;top:487px;color:#000">DIAP-INTE-INT</div><div class="g" style="left:752px;top:487px;color:#000">Integration</div><div class="g" style="left:994px;top:487px;color:#000">Traitement</div><div class="g" style="left:1195px;top:487px;color:#000;width:124px;overflow:hidden">R,E,IN</div><div class="a" style="left:587px;top:505px;width:718px;height:19px;background:#f0f0f0"></div><div class="a" style="left:587px;top:524px;width:718px;height:1px;background:repeating-linear-gradient(90deg,#c4c4c4 0 1.3px,transparent 1.3px 2.5px)"></div><svg width="16" height="16" style="left:598px;top:507px"><rect x="0.75" y="0.75" width="14.5" height="14.5" fill="none" stroke="#555" stroke-width="1.5"/></svg><div class="g" style="left:631px;top:507px;color:#000">DIAP-INTE-PLA</div><div class="g" style="left:752px;top:507px;color:#000">Planification</div><div class="g" style="left:994px;top:507px;color:#000">Traitement</div><div class="g" style="left:1195px;top:507px;color:#000;width:124px;overflow:hidden">R,E,PL</div><div class="a" style="left:587px;top:525px;width:718px;height:19px;background:#fff"></div><div class="a" style="left:587px;top:544px;width:718px;height:1px;background:repeating-linear-gradient(90deg,#c4c4c4 0 1.3px,transparent 1.3px 2.5px)"></div><svg width="16" height="16" style="left:598px;top:527px"><rect x="0.75" y="0.75" width="14.5" height="14.5" fill="none" stroke="#555" stroke-width="1.5"/></svg><div class="g" style="left:631px;top:527px;color:#000">DIAP-INTE-REC</div><div class="g" style="left:752px;top:527px;color:#000">Reception Evenements Externes</div><div class="g" style="left:994px;top:527px;color:#000">Traitement</div><div class="g" style="left:1195px;top:527px;color:#000;width:124px;overflow:hidden">R,E,RL</div><div class="a" style="left:587px;top:545px;width:718px;height:19px;background:#f0f0f0"></div><div class="a" style="left:587px;top:564px;width:718px;height:1px;background:repeating-linear-gradient(90deg,#c4c4c4 0 1.3px,transparent 1.3px 2.5px)"></div><svg width="16" height="16" style="left:598px;top:547px"><rect x="0.75" y="0.75" width="14.5" height="14.5" fill="none" stroke="#555" stroke-width="1.5"/></svg><div class="g" style="left:631px;top:547px;color:#000">DIAP-TR-EIA</div><div class="g" style="left:752px;top:547px;color:#000">Lanceur Traitement EIA Diapason</div><div class="g" style="left:994px;top:547px;color:#000">Traitement</div><div class="g" style="left:1195px;top:547px;color:#000;width:124px;overflow:hidden">Reference Traitem</div><div class="a" style="left:587px;top:565px;width:718px;height:19px;background:#fff"></div><div class="a" style="left:587px;top:584px;width:718px;height:1px;background:repeating-linear-gradient(90deg,#c4c4c4 0 1.3px,transparent 1.3px 2.5px)"></div><svg width="16" height="16" style="left:598px;top:567px"><rect x="0.75" y="0.75" width="14.5" height="14.5" fill="none" stroke="#555" stroke-width="1.5"/></svg><div class="g" style="left:631px;top:567px;color:#000">DIAP-TR-SI</div><div class="g" style="left:752px;top:567px;color:#000">Lanceur Traitement Simple Diapason</div><div class="g" style="left:994px;top:567px;color:#000">Requêtes</div><div class="g" style="left:1195px;top:567px;color:#000;width:124px;overflow:hidden">Reference Traitem</div><div class="a" style="left:587px;top:585px;width:718px;height:19px;background:#f0f0f0"></div><div class="a" style="left:587px;top:604px;width:718px;height:1px;background:repeating-linear-gradient(90deg,#c4c4c4 0 1.3px,transparent 1.3px 2.5px)"></div><svg width="16" height="16" style="left:598px;top:587px"><rect x="0.75" y="0.75" width="14.5" height="14.5" fill="none" stroke="#555" stroke-width="1.5"/></svg><div class="g" style="left:631px;top:587px;color:#000">DT</div><div class="g" style="left:752px;top:587px;color:#000">DT</div><div class="g" style="left:994px;top:587px;color:#000">Traitement</div><div class="g" style="left:1195px;top:587px;color:#000;width:124px;overflow:hidden">R,E,DT</div><div class="a" style="left:587px;top:605px;width:718px;height:19px;background:#fff"></div><div class="a" style="left:587px;top:624px;width:718px;height:1px;background:repeating-linear-gradient(90deg,#c4c4c4 0 1.3px,transparent 1.3px 2.5px)"></div><svg width="16" height="16" style="left:598px;top:607px"><rect x="0.75" y="0.75" width="14.5" height="14.5" fill="none" stroke="#555" stroke-width="1.5"/></svg><div class="g" style="left:631px;top:607px;color:#000">EIA001-Rec</div><div class="g" style="left:752px;top:607px;color:#000">Import SAGE - En Cours Client</div><div class="g" style="left:994px;top:607px;color:#000">Traitement</div><div class="g" style="left:1195px;top:607px;color:#000;width:124px;overflow:hidden">R,E,EIA001-Rec</div><div class="a" style="left:587px;top:625px;width:718px;height:19px;background:#f0f0f0"></div><div class="a" style="left:587px;top:644px;width:718px;height:1px;background:repeating-linear-gradient(90deg,#c4c4c4 0 1.3px,transparent 1.3px 2.5px)"></div><svg width="16" height="16" style="left:598px;top:627px"><rect x="0.75" y="0.75" width="14.5" height="14.5" fill="none" stroke="#555" stroke-width="1.5"/></svg><div class="g" style="left:631px;top:627px;color:#000">EIA010-BL</div><div class="g" style="left:752px;top:627px;color:#000">Import Lignes de Commande</div><div class="g" style="left:994px;top:627px;color:#000">Traitement</div><div class="g" style="left:1195px;top:627px;color:#000;width:124px;overflow:hidden">R,E,EIA010-BL</div><div class="a" style="left:587px;top:645px;width:718px;height:19px;background:#fff"></div><div class="a" style="left:587px;top:664px;width:718px;height:1px;background:repeating-linear-gradient(90deg,#c4c4c4 0 1.3px,transparent 1.3px 2.5px)"></div><svg width="16" height="16" style="left:598px;top:647px"><rect x="0.75" y="0.75" width="14.5" height="14.5" fill="none" stroke="#555" stroke-width="1.5"/></svg><div class="g" style="left:631px;top:647px;color:#000">EIA010-Rec</div><div class="g" style="left:752px;top:647px;color:#000">Reception Lignes de Commande</div><div class="g" style="left:994px;top:647px;color:#000">Traitement</div><div class="g" style="left:1195px;top:647px;color:#000;width:124px;overflow:hidden">R,E,EIA010-Rec</div><div class="a" style="left:587px;top:665px;width:718px;height:19px;background:#f0f0f0"></div><div class="a" style="left:587px;top:684px;width:718px;height:1px;background:repeating-linear-gradient(90deg,#c4c4c4 0 1.3px,transparent 1.3px 2.5px)"></div><svg width="16" height="16" style="left:598px;top:667px"><rect x="0.75" y="0.75" width="14.5" height="14.5" fill="none" stroke="#555" stroke-width="1.5"/></svg><div class="g" style="left:631px;top:667px;color:#000">EIA011-BL</div><div class="g" style="left:752px;top:667px;color:#000">Import Nomenclatures</div><div class="g" style="left:994px;top:667px;color:#000">Traitement</div><div class="g" style="left:1195px;top:667px;color:#000;width:124px;overflow:hidden">R,E,EIA011-BL</div><div class="a" style="left:587px;top:685px;width:718px;height:19px;background:#fff"></div><div class="a" style="left:587px;top:704px;width:718px;height:1px;background:repeating-linear-gradient(90deg,#c4c4c4 0 1.3px,transparent 1.3px 2.5px)"></div><svg width="16" height="16" style="left:598px;top:687px"><rect x="0.75" y="0.75" width="14.5" height="14.5" fill="none" stroke="#555" stroke-width="1.5"/></svg><div class="g" style="left:631px;top:687px;color:#000">EIA011-Rec</div><div class="g" style="left:752px;top:687px;color:#000">Reception Nomenclatures</div><div class="g" style="left:994px;top:687px;color:#000">Traitement</div><div class="g" style="left:1195px;top:687px;color:#000;width:124px;overflow:hidden">R,E,EIA011-Rec</div><div class="a" style="left:587px;top:705px;width:718px;height:19px;background:#f0f0f0"></div><div class="a" style="left:587px;top:724px;width:718px;height:1px;background:repeating-linear-gradient(90deg,#c4c4c4 0 1.3px,transparent 1.3px 2.5px)"></div><svg width="16" height="16" style="left:598px;top:707px"><rect x="0.75" y="0.75" width="14.5" height="14.5" fill="none" stroke="#555" stroke-width="1.5"/></svg><div class="g" style="left:631px;top:707px;color:#000">EIA013</div><div class="g" style="left:752px;top:707px;color:#000">Export Clients</div><div class="g" style="left:994px;top:707px;color:#000">Impression</div><div class="g" style="left:1195px;top:707px;color:#000;width:124px;overflow:hidden">R,E,EIA013</div><div class="a" style="left:587px;top:725px;width:718px;height:19px;background:#fff"></div><div class="a" style="left:587px;top:744px;width:718px;height:1px;background:repeating-linear-gradient(90deg,#c4c4c4 0 1.3px,transparent 1.3px 2.5px)"></div><svg width="16" height="16" style="left:598px;top:727px"><rect x="0.75" y="0.75" width="14.5" height="14.5" fill="none" stroke="#555" stroke-width="1.5"/></svg><div class="g" style="left:631px;top:727px;color:#000">EIA014</div><div class="g" style="left:752px;top:727px;color:#000">Export Commandes</div><div class="g" style="left:994px;top:727px;color:#000">Impression</div><div class="g" style="left:1195px;top:727px;color:#000;width:124px;overflow:hidden">R,E,EIA014</div><div class="a" style="left:587px;top:745px;width:718px;height:19px;background:#f0f0f0"></div><div class="a" style="left:587px;top:764px;width:718px;height:1px;background:repeating-linear-gradient(90deg,#c4c4c4 0 1.3px,transparent 1.3px 2.5px)"></div><svg width="16" height="16" style="left:598px;top:747px"><rect x="0.75" y="0.75" width="14.5" height="14.5" fill="none" stroke="#555" stroke-width="1.5"/></svg><div class="g" style="left:631px;top:747px;color:#000">EIA015</div><div class="g" style="left:752px;top:747px;color:#000">Export Séries</div><div class="g" style="left:994px;top:747px;color:#000">Impression</div><div class="g" style="left:1195px;top:747px;color:#000;width:124px;overflow:hidden">R,E,EIA015</div><div class="a" style="left:587px;top:765px;width:718px;height:19px;background:#fff"></div><div class="a" style="left:587px;top:784px;width:718px;height:1px;background:repeating-linear-gradient(90deg,#c4c4c4 0 1.3px,transparent 1.3px 2.5px)"></div><svg width="16" height="16" style="left:598px;top:767px"><rect x="0.75" y="0.75" width="14.5" height="14.5" fill="none" stroke="#555" stroke-width="1.5"/></svg><div class="g" style="left:631px;top:767px;color:#000">FacCalVAC</div><div class="g" style="left:752px;top:767px;color:#000">FacCalVAC</div><div class="g" style="left:994px;top:767px;color:#000">Requêtes</div><div class="g" style="left:1195px;top:767px;color:#000;width:124px;overflow:hidden">R,E,FacCalVAC</div><div class="a" style="left:587px;top:785px;width:718px;height:19px;background:#f0f0f0"></div><div class="a" style="left:587px;top:804px;width:718px;height:1px;background:repeating-linear-gradient(90deg,#c4c4c4 0 1.3px,transparent 1.3px 2.5px)"></div><svg width="16" height="16" style="left:598px;top:787px"><rect x="0.75" y="0.75" width="14.5" height="14.5" fill="none" stroke="#555" stroke-width="1.5"/></svg><div class="g" style="left:631px;top:787px;color:#000">IN</div><div class="g" style="left:752px;top:787px;color:#000">IN</div><div class="g" style="left:994px;top:787px;color:#000">Traitement</div><div class="g" style="left:1195px;top:787px;color:#000;width:124px;overflow:hidden">R,E,IN</div><div class="a" style="left:587px;top:805px;width:718px;height:19px;background:#fff"></div><div class="a" style="left:587px;top:824px;width:718px;height:1px;background:repeating-linear-gradient(90deg,#c4c4c4 0 1.3px,transparent 1.3px 2.5px)"></div><svg width="16" height="16" style="left:598px;top:807px"><rect x="0.75" y="0.75" width="14.5" height="14.5" fill="none" stroke="#555" stroke-width="1.5"/></svg><div class="g" style="left:631px;top:807px;color:#000">ispurgetraces</div><div class="g" style="left:752px;top:807px;color:#000">purge&nbsp; fichiers traces système</div><div class="g" style="left:994px;top:807px;color:#000">Système</div><div class="a" style="left:587px;top:825px;width:718px;height:19px;background:#f0f0f0"></div><div class="a" style="left:587px;top:844px;width:718px;height:1px;background:repeating-linear-gradient(90deg,#c4c4c4 0 1.3px,transparent 1.3px 2.5px)"></div><svg width="16" height="16" style="left:598px;top:827px"><rect x="0.75" y="0.75" width="14.5" height="14.5" fill="none" stroke="#555" stroke-width="1.5"/></svg><div class="g" style="left:631px;top:827px;color:#000">isstatdb</div><div class="g" style="left:752px;top:827px;color:#000">Statistiques d'accès aux bases</div><div class="g" style="left:994px;top:827px;color:#000">Système</div><div class="a" style="left:587px;top:845px;width:718px;height:19px;background:#fff"></div><div class="a" style="left:587px;top:864px;width:718px;height:1px;background:repeating-linear-gradient(90deg,#c4c4c4 0 1.3px,transparent 1.3px 2.5px)"></div><svg width="16" height="16" style="left:598px;top:847px"><rect x="0.75" y="0.75" width="14.5" height="14.5" fill="none" stroke="#555" stroke-width="1.5"/></svg><div class="g" style="left:631px;top:847px;color:#000">ISSysOccup</div><div class="g" style="left:752px;top:847px;color:#000">EXP: Suivi Occupation Disque &amp; Base</div><div class="g" style="left:994px;top:847px;color:#000">Système</div><div class="g" style="left:1195px;top:847px;color:#000;width:124px;overflow:hidden">R,E,ISSysOccup</div><div class="a" style="left:587px;top:865px;width:718px;height:19px;background:#f0f0f0"></div><div class="a" style="left:587px;top:884px;width:718px;height:1px;background:repeating-linear-gradient(90deg,#c4c4c4 0 1.3px,transparent 1.3px 2.5px)"></div><svg width="16" height="16" style="left:598px;top:867px"><rect x="0.75" y="0.75" width="14.5" height="14.5" fill="none" stroke="#555" stroke-width="1.5"/></svg><div class="g" style="left:631px;top:867px;color:#000">issysoccup</div><div class="g" style="left:752px;top:867px;color:#000">Suivi Occupation Volumes</div><div class="g" style="left:994px;top:867px;color:#000">Système</div><div class="g" style="left:1195px;top:867px;color:#000;width:124px;overflow:hidden">R,E,suividb</div><div class="a" style="left:587px;top:885px;width:718px;height:19px;background:#fff"></div><div class="a" style="left:587px;top:904px;width:718px;height:1px;background:repeating-linear-gradient(90deg,#c4c4c4 0 1.3px,transparent 1.3px 2.5px)"></div><svg width="16" height="16" style="left:598px;top:887px"><rect x="0.75" y="0.75" width="14.5" height="14.5" fill="none" stroke="#555" stroke-width="1.5"/></svg><div class="g" style="left:631px;top:887px;color:#000">Job-CBN</div><div class="g" style="left:752px;top:887px;color:#000">Lanceur CBN multi-sites</div><div class="g" style="left:994px;top:887px;color:#000">Traitement</div>
<div class="a" style="left:627px;top:245px;width:1px;height:660px;background:repeating-linear-gradient(180deg,#c8c8c8 0 1.3px,transparent 1.3px 2.5px)"></div><div class="a" style="left:748px;top:245px;width:1px;height:660px;background:repeating-linear-gradient(180deg,#c8c8c8 0 1.3px,transparent 1.3px 2.5px)"></div><div class="a" style="left:990px;top:245px;width:1px;height:660px;background:repeating-linear-gradient(180deg,#c8c8c8 0 1.3px,transparent 1.3px 2.5px)"></div><div class="a" style="left:1191px;top:245px;width:1px;height:660px;background:repeating-linear-gradient(180deg,#c8c8c8 0 1.3px,transparent 1.3px 2.5px)"></div><div class="a" style="left:587px;top:284px;width:718px;height:1px;background:repeating-linear-gradient(90deg,#5c5346 0 1.3px,transparent 1.3px 2.5px)"></div><div class="a" style="left:587px;top:304px;width:718px;height:1px;background:repeating-linear-gradient(90deg,#5c5346 0 1.3px,transparent 1.3px 2.5px)"></div><div class="a" style="left:1305px;top:223px;width:20px;height:684px;background:#7397c0;border-left:1px solid #6a86b4"></div><div class="a" style="left:1305px;top:223px;width:20px;height:271px;background:linear-gradient(90deg,#dbe7f8 0 50%,#c2d5f1 50% 100%);border:1px solid #6781b3"></div><div class="a" style="left:1305px;top:242px;width:20px;height:1px;background:#6781b3"></div><svg width="12" height="7" style="left:1309px;top:229px"><path d="M0 6.5 H12 L6 0 Z" fill="#3d4866"/></svg><div class="a" style="left:1305px;top:887px;width:20px;height:20px;background:linear-gradient(90deg,#dbe7f8 0 50%,#c2d5f1 50% 100%);border:1px solid #6781b3"></div><svg width="12" height="7" style="left:1309px;top:894px"><path d="M0 0 H12 L6 6.5 Z" fill="#3d4866"/></svg><div class="a" style="left:587px;top:906px;width:738px;height:9px;background:#7397c0;border-top:1px solid #6a86b4"></div><div class="a" style="left:588px;top:907px;width:18px;height:8px;background:#d6e4f7;border:1px solid #6781b3"></div><div class="a" style="left:606px;top:907px;width:337px;height:8px;background:#d6e4f7;border:1px solid #6781b3"></div><div class="a" style="left:1284px;top:907px;width:20px;height:8px;background:#d6e4f7;border:1px solid #6781b3"></div>
<svg width="8" height="8" style="left:592px;top:910px"><path d="M7 0 V8 L1 4 Z" fill="#3d4866"/></svg><svg width="8" height="8" style="left:1292px;top:910px"><path d="M1 0 V8 L7 4 Z" fill="#3d4866"/></svg>
<div class="a" style="left:590px;top:282px;width:385px;height:26px;border:4px solid #f00"></div>
<div class="a" style="left:1333px;top:249px;width:569px;height:666px;border-left:2px solid #a9a9a9;border-top:1px solid #a9a9a9"></div><svg width="67" height="26" style="left:1341px;top:224px"><path d="M0 25 L12 3 Q13.5 1 16 1 H47 Q49 1 52 3 L66 25" fill="#f4f4f4" stroke="#a9a9a9" stroke-width="1.2"/></svg><svg width="197" height="26" style="left:1402px;top:224px"><path d="M0 25 L12 3 Q13.5 1 16 1 H177 Q179 1 182 3 L196 25" fill="#f4f4f4" stroke="#a9a9a9" stroke-width="1.2"/></svg><svg width="113" height="26" style="left:1587px;top:224px"><path d="M0 25 L12 3 Q13.5 1 16 1 H93 Q95 1 98 3 L112 25" fill="#f4f4f4" stroke="#a9a9a9" stroke-width="1.2"/></svg><svg width="81" height="26" style="left:1683px;top:224px"><path d="M0 25 L12 3 Q13.5 1 16 1 H61 Q63 1 66 3 L80 25" fill="#f4f4f4" stroke="#a9a9a9" stroke-width="1.2"/></svg><div class="rp" style="left:1354px;top:230px">Général</div><div class="rp" style="left:1415px;top:230px">Environnement PROGRESS</div><div class="rp" style="left:1598px;top:229px;font-weight:bold;font-size:16.4px">Démarrage</div><div class="rp" style="left:1689px;top:230px">Fin / arrêt</div>
<div class="a" style="left:1389px;top:249px;width:337px;height:44px;border:4px solid #f00;background:#f0e5d2"></div><div class="rp" style="left:1407px;top:261px">Paramètres</div><div class="a" style="left:1491px;top:257px;width:30px;height:29px;background:#c9c9c9;border:1px solid #d6d6d6"></div><svg width="22" height="20" style="left:1495px;top:261px"><path d="M4 18 L8 8 L11 12 L13 6 L17 13 M9 3 H19 L16 11" stroke="#e6e6e6" stroke-width="1.6" fill="none"/><path d="M3 17 L7 7 L10 11 L12 5 L16 12 M8 2 H18 L15 10" stroke="#a8a8a8" stroke-width="1.2" fill="none"/></svg><div class="rp" style="left:1528px;top:261px">Calcul des Besoins Net sur U1</div><div class="rp" style="left:1388px;top:294px">Automatique ?</div><div class="a" style="left:1490px;top:295px;width:12px;height:12px;border:1px solid #c8c8c8;background:#f2f2f2"></div><svg width="10" height="8" style="left:1491px;top:298px"><path d="M1 4 L4 7 L9 1" stroke="#c4c4c4" stroke-width="1.3" fill="none"/></svg><div class="rp" style="left:1399px;top:320px">Agenda Std.</div><div class="a" style="left:1490px;top:315px;width:347px;height:25px;background:#cbcbcb;border:1px solid #c3c3c3"></div><svg width="12" height="7" style="left:1819px;top:324px"><path d="M1 1 L6 6 L11 1" stroke="#a5a5a5" stroke-width="1.3" fill="none"/></svg><div class="rp" style="left:1390px;top:349px">Agenda Loca</div><div class="a" style="left:1491px;top:345px;width:30px;height:29px;background:#c9c9c9;border:1px solid #d6d6d6"></div><svg width="22" height="20" style="left:1495px;top:349px"><path d="M4 18 L8 8 L11 12 L13 6 L17 13 M9 3 H19 L16 11" stroke="#e6e6e6" stroke-width="1.6" fill="none"/><path d="M3 17 L7 7 L10 11 L12 5 L16 12 M8 2 H18 L15 10" stroke="#a8a8a8" stroke-width="1.2" fill="none"/></svg><div class="rp" style="left:1528px;top:349px">*DEFINI</div><div class="rp" style="left:1390px;top:381px">Détail Agenda</div><div class="a" style="left:1490px;top:378px;width:395px;height:95px;border:1px solid #a3a3a3;border-top-color:#9a9a9a;background:#f0f0f0"></div><div class="a" style="left:1860px;top:379px;width:1px;height:93px;background:#e6e6e6"></div><svg width="10" height="6" style="left:1867px;top:386px"><path d="M1 5 L5 1 L9 5" stroke="#b0b0b0" stroke-width="1.3" fill="none"/></svg><svg width="10" height="6" style="left:1867px;top:457px"><path d="M1 1 L5 5 L9 1" stroke="#b0b0b0" stroke-width="1.3" fill="none"/></svg><div class="rp" style="left:1493px;top:383px">Lancer Tous les jours : A 01:00</div><div class="rp" style="left:1396px;top:479px">Job unique ?</div><div class="a" style="left:1490px;top:480px;width:12px;height:12px;border:1px solid #c8c8c8;background:#fff"></div><div class="rp" style="left:1362px;top:503px">Priorité d'exécution</div><div class="rp" style="left:1494px;top:503px;font-size:12px">0</div><div class="rp" style="left:1362px;top:527px">Répertoire Position</div><div class="rp" style="left:1493px;top:527px">../Shell</div><div class="rp" style="left:1366px;top:551px">Utilisateur Soumis.</div><div class="rp" style="left:1493px;top:551px">isia</div><div class="a" style="left:1797px;top:548px;width:17px;height:17px;background:#cfcfcf;border:1px solid #dadada"></div><div class="rp" style="left:1801px;top:548px;color:#eee;font-size:12px;font-weight:bold">?</div><div class="rp" style="left:1822px;top:551px">Support ISIA</div>
<svg width="14" height="22" style="left:1673px;top:767px"><path d="M1 1 V17 L5 13 L8 20 L10.5 19 L7.5 12 H13 Z" fill="#fff" stroke="#000" stroke-width="1"/></svg>
<div class="a" style="left:1485px;top:104px;width:291px;height:57px;background:#fff"></div><div class="t" style="left:1487px;top:108px;font-size:19.2px;color:#f21a1a;line-height:24.6px">On mets ici le traitement qu'on<br>vient de créer !</div><svg width="80" height="100" style="left:1510px;top:150px"><g transform="translate(2,2)" opacity="0.35"><path d="M64 8 L14 72" stroke="#333" stroke-width="4" stroke-linecap="round"/><path d="M6 90 L12 68 L26 76 Z" fill="#333"/></g><path d="M64 8 L14 72" stroke="#f00" stroke-width="4" stroke-linecap="round"/><path d="M6 90 L12 68 L26 76 Z" fill="#f00"/></svg>
</body></html>
